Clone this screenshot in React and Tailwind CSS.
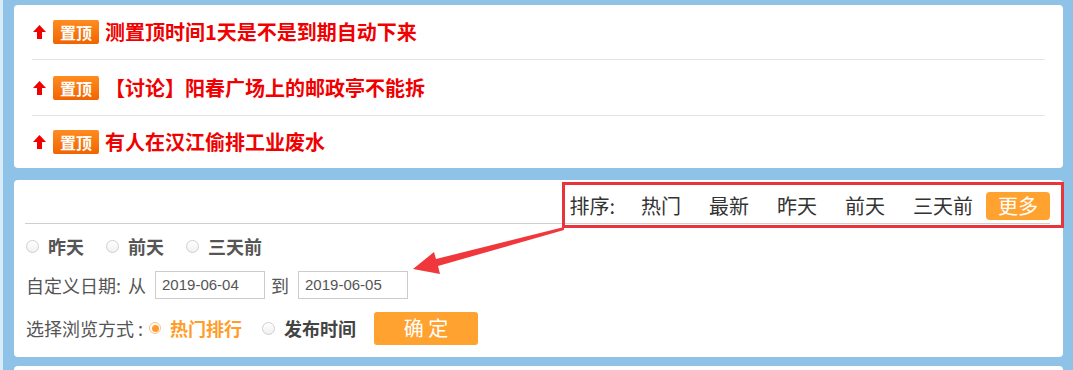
const topics = [
    { title: '测置顶时间1天是不是到期自动下来', h: 'h-[55px] border-b' },
    { title: '【讨论】阳春广场上的邮政亭不能拆', h: 'h-[56px] border-b' },
    { title: '有人在汉江偷排工业废水', h: 'h-[52px]' },
]

const sorts = ['热门', '最新', '昨天', '前天', '三天前']

function UpArrow() {
    return (
        <svg width="13" height="14" viewBox="0 0 13 14" className="block shrink-0">
            <path d="M6.5 0 L13 7 L9 7 L9 14 L4 14 L4 7 L0 7 Z" fill="#f10000" />
        </svg>
    )
}

function Radio({ checked, className = '' }) {
    if (checked) {
        return (
            <span className={`flex w-[12px] h-[12px] rounded-full border border-[#f5c48e] bg-white items-center justify-center shrink-0 ${className}`}>
                <span className="block w-[7px] h-[7px] rounded-full bg-[#ff9a2c]" />
            </span>
        )
    }
    return <span className={`block w-[13px] h-[13px] rounded-full border border-[#cfcfcf] bg-gradient-to-b from-white to-[#f0f0f0] shrink-0 ${className}`} />
}

export default function App() {
    return (
        <div className="relative min-h-screen bg-[#8fc2e7] border-l-[3px] border-[#d8ebf8] pl-[11px] pr-[10px] pt-[5px] font-['Noto_Sans_CJK_SC',sans-serif] overflow-hidden">
            {/* 置顶 list */}
            <div className="bg-white rounded-[4px] px-[18px]">
                {topics.map((t) => (
                    <div key={t.title} className={`flex items-center ${t.h} border-[#e4e4e4]`}>
                        <span className="ml-[1px]"><UpArrow /></span>
                        <span className="ml-[7px] w-[46px] h-[24px] rounded-[2px] bg-gradient-to-b from-[#ff8c1f] to-[#f06400] text-white text-[16px] font-bold leading-[24px] text-center">置顶</span>
                        <span className="ml-[6px] text-[20px] font-bold text-[#f00000] leading-none">{t.title}</span>
                    </div>
                ))}
            </div>

            {/* filter panel */}
            <div className="relative mt-[12px] bg-white rounded-[4px] pb-[5px]">
                <div className="ml-[11px] mr-[13px] h-[44px] pt-[9px] border-b border-[#cfcfcf] flex items-center justify-end text-[20px] text-[#333]">
                    <span className="mr-[12px]">排序:</span>
                    {sorts.map((s) => (
                        <span key={s} className="px-[14px]">{s}</span>
                    ))}
                    <span className="ml-[-1px] w-[64px] h-[28px] rounded-[4px] bg-[#ffa22f] text-white flex items-center justify-center">更多</span>
                </div>

                <div className="pl-[12px] text-[#555]">
                    <div className="h-[40px] mt-[2px] flex items-center text-[18px] font-bold">
                        <Radio />
                        <span className="ml-[9px]">昨天</span>
                        <Radio className="ml-[22px]" />
                        <span className="ml-[9px]">前天</span>
                        <Radio className="ml-[22px]" />
                        <span className="ml-[9px]">三天前</span>
                    </div>

                    <div className="h-[38px] flex items-center text-[18px]">
                        <span>自定义日期:</span>
                        <span className="ml-[7px]">从</span>
                        <span className="ml-[9px] w-[110px] h-[28px] border border-[#cccccc] pl-[6px] flex items-center font-['Liberation_Sans',sans-serif] text-[15px]">2019-06-04</span>
                        <span className="ml-[6px]">到</span>
                        <span className="ml-[9px] w-[110px] h-[28px] border border-[#cccccc] pl-[6px] flex items-center font-['Liberation_Sans',sans-serif] text-[15px]">2019-06-05</span>
                    </div>

                    <div className="h-[48px] flex items-center">
                        <span className="text-[18px]">选择浏览方式 :</span>
                        <Radio checked className="ml-[6px]" />
                        <span className="ml-[9px] text-[18px] font-bold text-[#ff9d2a]">热门排行</span>
                        <Radio className="ml-[20px]" />
                        <span className="ml-[9px] text-[18px] font-bold text-[#444]">发布时间</span>
                        <span className="ml-[18px] w-[104px] h-[33px] rounded-[3px] bg-[#ffa22f] text-white text-[20px] flex items-center justify-center">确 定</span>
                    </div>
                </div>

                {/* annotation box */}
                <div className="absolute left-[548px] top-[2px] w-[502px] h-[46px] border-[3px] border-[#e8343b]" />
            </div>

            <div className="mt-[9px] h-[20px] bg-white rounded-t-[4px]" />

            {/* annotation arrow */}
            <svg className="absolute left-0 top-0 pointer-events-none" width="1073" height="370">
                <polygon points="410,269 431,252 433,259 561,227 561,230 435,266 437,274" fill="#f0383c" />
            </svg>
        </div>
    )
}
